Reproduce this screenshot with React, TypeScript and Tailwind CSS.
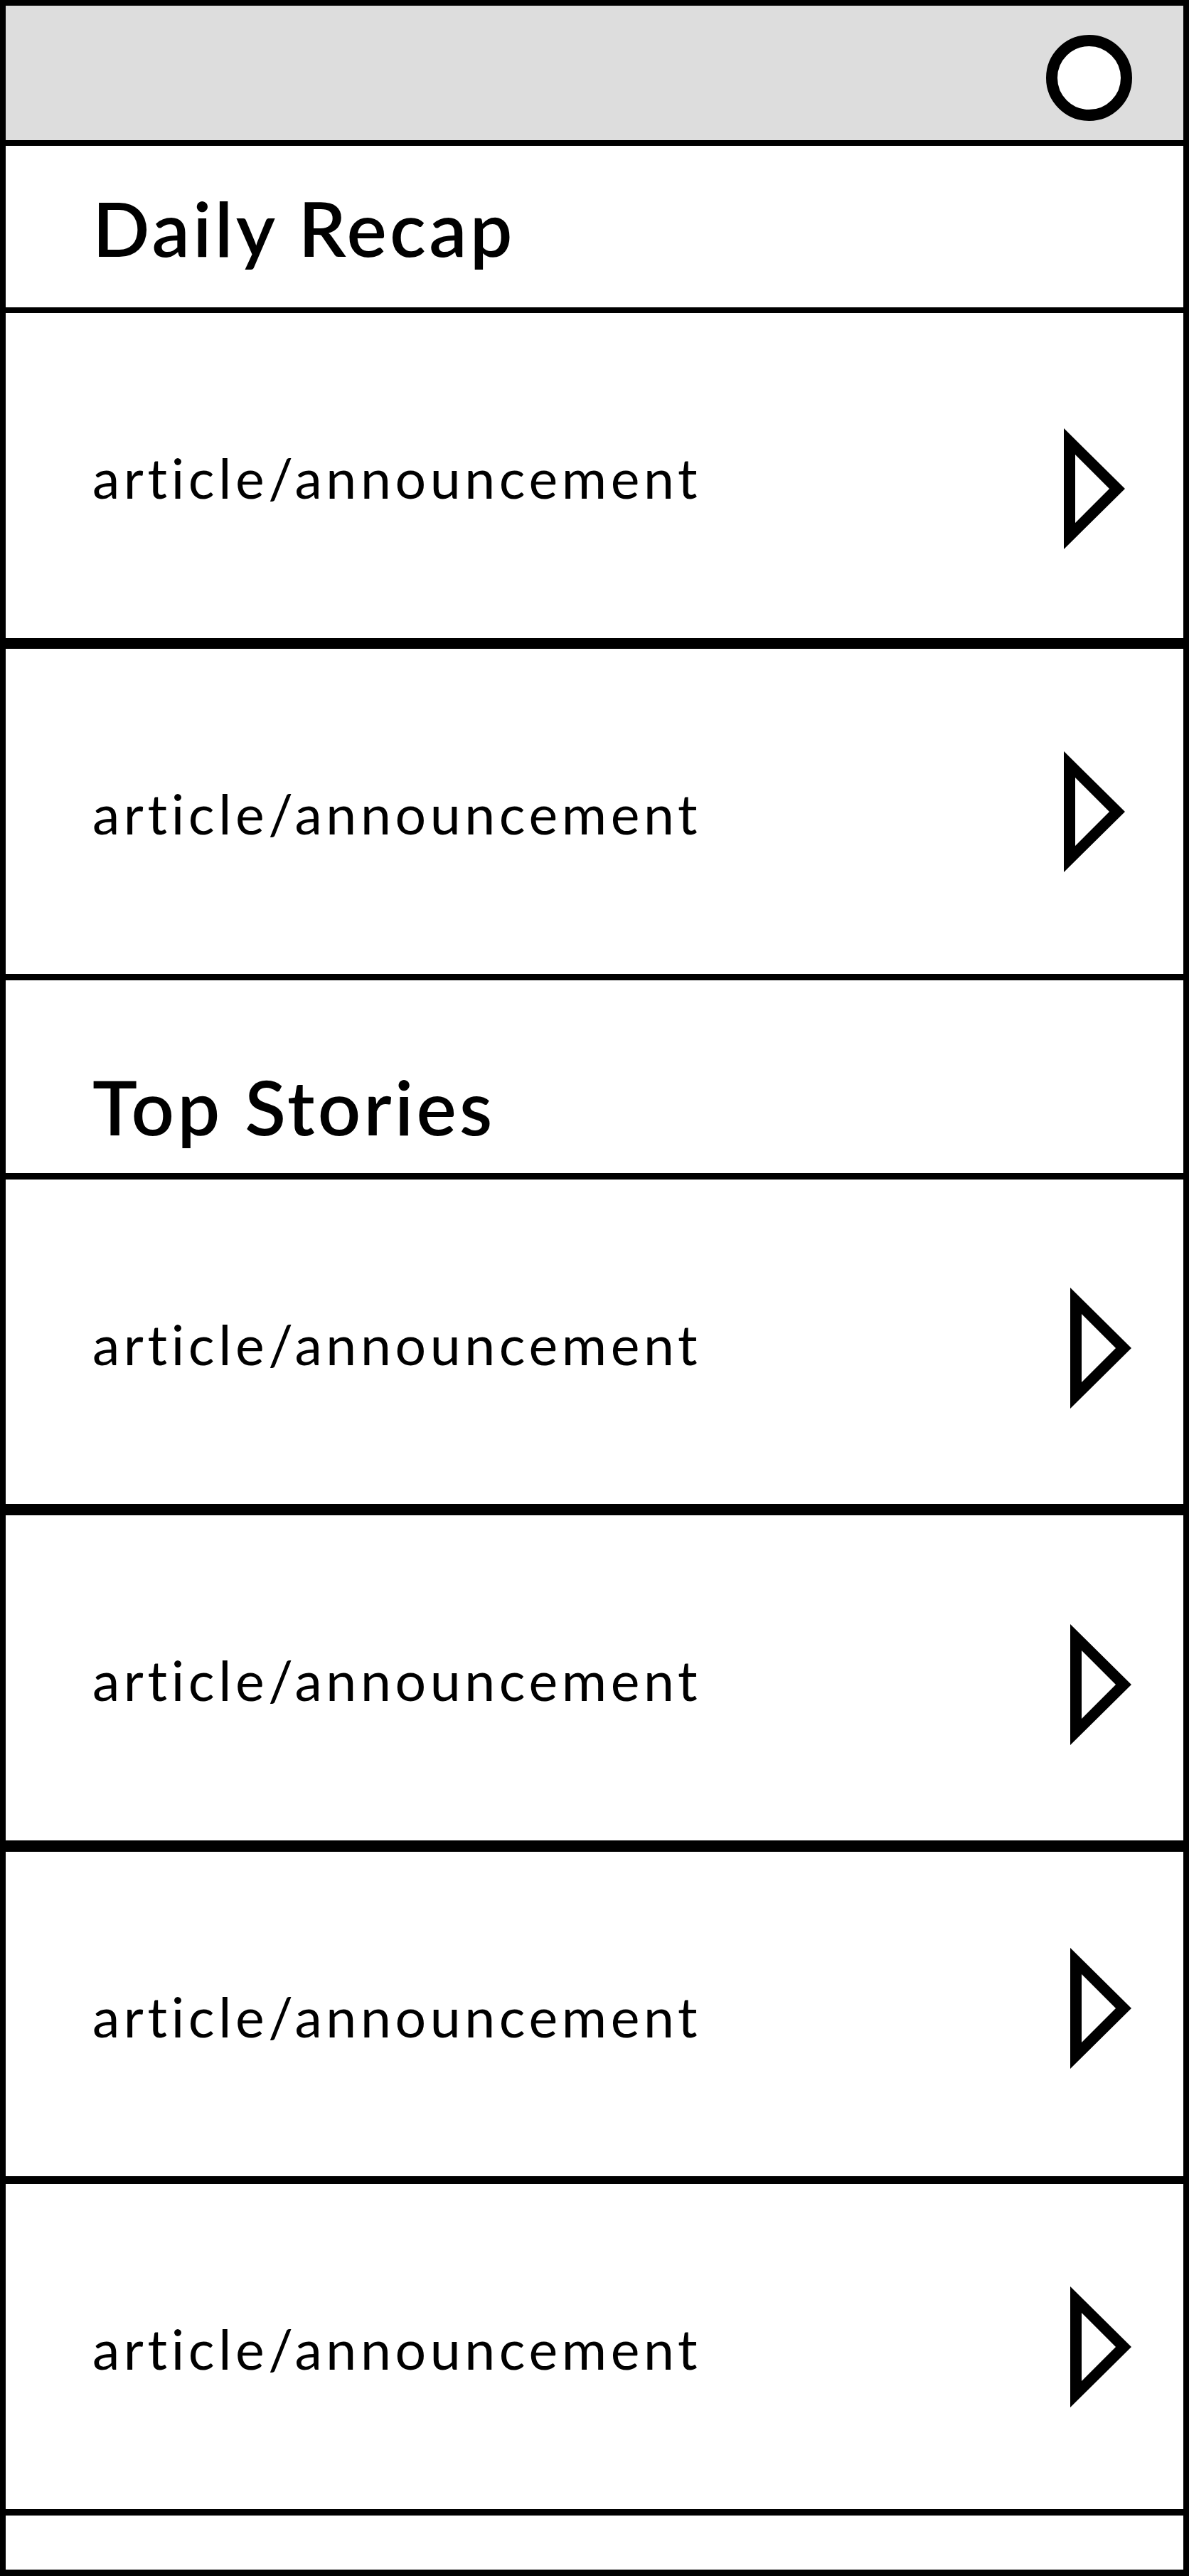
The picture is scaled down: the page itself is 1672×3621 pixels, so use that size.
const rows = [
  { box: 'h-[472px] border-b-[15px] pr-[82px]', tri: 'mt-[162px]' },
  { box: 'h-[466px] border-b-[9px] pr-[82px]', tri: 'mt-[144px]' },
];

const topRows = [
  { box: 'h-[472px] border-b-[16px] pr-[73px]', tri: 'mt-[152px]' },
  { box: 'h-[473px] border-b-[16px] pr-[73px]', tri: 'mt-[153px]' },
  { box: 'h-[467px] border-b-[11px] pr-[73px]', tri: 'mt-[135px]' },
  { box: 'h-[466px] border-b-[9px] pr-[73px]', tri: 'mt-[144px]' },
];

function Arrow({ className }: { className: string }) {
  return (
    <svg className={className} width="86" height="170" viewBox="0 0 86 170">
      <path
        d="M0 0 L86 85 L0 170 Z M16 37 L16 133 L64 85 Z"
        fill="#000"
        fillRule="evenodd"
      />
    </svg>
  );
}

function ArticleRow({ box, tri }: { box: string; tri: string }) {
  return (
    <div className={'flex items-start justify-between border-black bg-white pl-[122px] ' + box}>
      <span className="pt-[193px] text-[77px] leading-none tracking-[5.6px] [font-variant-ligatures:none] text-black">
        article/announcement
      </span>
      <Arrow className={'shrink-0 ' + tri} />
    </div>
  );
}

export default function App() {
  return (
    <div className="w-[1672px] h-[3621px] border-x-8 border-t-8 border-b-[9px] border-black bg-white font-['Lato',sans-serif] flex flex-col">
      {/* top bar */}
      <div className="h-[197px] shrink-0 border-b-8 border-black bg-[#dddddd] flex justify-end items-start pt-[41px] pr-[72px]">
        <div className="w-[121px] h-[121px] rounded-full border-[16px] border-black bg-white" />
      </div>

      <div className="h-[235px] shrink-0 border-b-8 border-black pl-[122px] pt-[62px]">
        <h1 className="text-[106px] leading-none font-semibold tracking-[4.3px] text-black">Daily Recap</h1>
      </div>

      {rows.map((r, i) => (
        <ArticleRow key={i} box={r.box} tri={r.tri} />
      ))}

      <div className="h-[280px] shrink-0 border-b-[9px] border-black pl-[122px] pt-[124px]">
        <h1 className="text-[106px] leading-none font-semibold tracking-[4.3px] text-black">Top Stories</h1>
      </div>

      {topRows.map((r, i) => (
        <ArticleRow key={i} box={r.box} tri={r.tri} />
      ))}

      <div className="flex-1" />
    </div>
  );
}
